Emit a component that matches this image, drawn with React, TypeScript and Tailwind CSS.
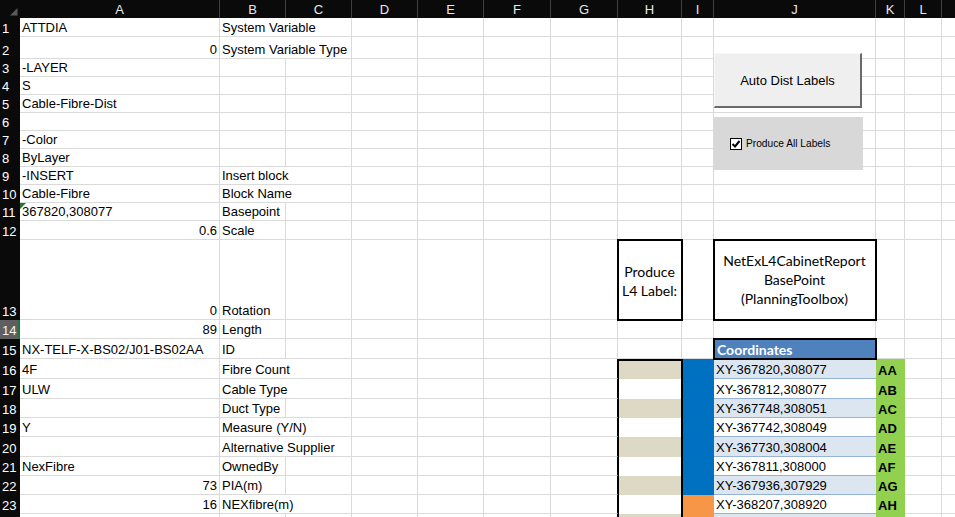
import React from 'react';

// column letters across the sheet header (M is cut off by the window edge)
const cols = ['A', 'B', 'C', 'D', 'E', 'F', 'G', 'H', 'I', 'J', 'K', 'L', ''];

type Row = { n: number; a?: string; ar?: boolean; b?: string; ov?: boolean; xy?: string; k?: string };

const rows: Row[] = [
  { n: 1, a: 'ATTDIA', b: 'System Variable', ov: true },
  { n: 2, a: '0', ar: true, b: 'System Variable Type', ov: true },
  { n: 3, a: '-LAYER' },
  { n: 4, a: 'S' },
  { n: 5, a: 'Cable-Fibre-Dist' },
  { n: 6 },
  { n: 7, a: '-Color' },
  { n: 8, a: 'ByLayer' },
  { n: 9, a: '-INSERT', b: 'Insert block', ov: true },
  { n: 10, a: 'Cable-Fibre', b: 'Block Name', ov: true },
  { n: 11, a: '367820,308077', b: 'Basepoint' },
  { n: 12, a: '0.6', ar: true, b: 'Scale' },
  { n: 13, a: '0', ar: true, b: 'Rotation' },
  { n: 14, a: '89', ar: true, b: 'Length' },
  { n: 15, a: 'NX-TELF-X-BS02/J01-BS02AA', b: 'ID' },
  { n: 16, a: '4F', b: 'Fibre Count', ov: true, xy: 'XY-367820,308077', k: 'AA' },
  { n: 17, a: 'ULW', b: 'Cable Type', ov: true, xy: 'XY-367812,308077', k: 'AB' },
  { n: 18, b: 'Duct Type', xy: 'XY-367748,308051', k: 'AC' },
  { n: 19, a: 'Y', b: 'Measure (Y/N)', ov: true, xy: 'XY-367742,308049', k: 'AD' },
  { n: 20, b: 'Alternative Supplier', ov: true, xy: 'XY-367730,308004', k: 'AE' },
  { n: 21, a: 'NexFibre', b: 'OwnedBy', xy: 'XY-367811,308000', k: 'AF' },
  { n: 22, a: '73', ar: true, b: 'PIA(m)', xy: 'XY-367936,307929', k: 'AG' },
  { n: 23, a: '16', ar: true, b: 'NEXfibre(m)', ov: true, xy: 'XY-368207,308920', k: 'AH' },
  { n: 24, xy: '', k: '' },
];

const grid = 'border-r border-b border-[#dadada]';
const txt = 'flex items-end px-[2px] pb-[1px] text-[13px] leading-[15px] whitespace-nowrap text-black';

function SheetRow({ r }: { r: Row }) {
  const table = r.n >= 16;
  const even = r.n % 2 === 0;
  return (
    <>
      {r.n === 14 ? (
        <div className="flex items-end pl-[2px] pb-[1px] text-[13px] leading-[15px] bg-[#5f5f5f] text-[#f2f2f2] border-r-2 border-[#217346]">{r.n}</div>
      ) : (
        <div className="flex items-end pl-[2px] pb-[1px] text-[13px] leading-[15px] bg-[#0a0a0a] text-white">{r.n < 24 ? r.n : ''}</div>
      )}

      <div className={`${grid} ${txt} relative ${r.ar ? 'justify-end' : ''}`}>
        {r.n === 11 && (
          <svg className="absolute left-0 top-0" width="6" height="6" viewBox="0 0 6 6">
            <path d="M0 0H6L0 6Z" fill="#1e7b34" />
          </svg>
        )}
        {r.a}
      </div>

      <div className={r.ov ? `border-b border-[#dadada] ${txt}` : `${grid} ${txt}`}>{r.b}</div>
      <div className={grid} />
      <div className={grid} />
      <div className={grid} />
      <div className={grid} />

      {table ? <div className="border-b border-b-[#dadada] border-r border-r-black" /> : <div className={grid} />}

      {/* H column */}
      {r.n === 13 ? (
        <div className="relative z-10 outline-2 outline-black -outline-offset-1 border-r border-b border-[#dadada] flex flex-col items-center justify-center font-['Lato',sans-serif] text-[14px] leading-[19px] text-black pt-[3px]">
          <span>Produce</span>
          <span>L4 Label:</span>
        </div>
      ) : table ? (
        r.n === 16 ? (
          <div className="border-x border-t-2 border-black bg-[#ddd9c4]" />
        ) : (
          <div className={`border-x border-black ${even ? 'bg-[#ddd9c4]' : 'bg-white'}`} />
        )
      ) : (
        <div className={grid} />
      )}

      {/* I column */}
      {table ? (
        <div className={`border-l border-black ${r.n >= 23 ? 'bg-[#f79646]' : 'bg-[#0070c0]'}`} />
      ) : (
        <div className={grid} />
      )}

      {/* J column */}
      {r.n === 13 ? (
        <div className="relative z-10 outline-2 outline-black -outline-offset-1 border-r border-b border-[#dadada] flex flex-col items-center justify-center font-['Lato',sans-serif] text-[14px] leading-[19px] text-black">
          <span>NetExL4CabinetReport</span>
          <span>BasePoint</span>
          <span>(PlanningToolbox)</span>
        </div>
      ) : r.n === 15 ? (
        <div className="relative z-10 outline-2 outline-black -outline-offset-1 bg-[#4f81bd] flex items-center px-[3px] font-['Lato',sans-serif] text-[14px] font-bold text-white">
          Coordinates
        </div>
      ) : table ? (
        <div className={`border-b border-[#95b3d7] ${txt} ${even ? 'bg-[#dce6f1]' : 'bg-white'}`}>{r.xy}</div>
      ) : (
        <div className={grid} />
      )}

      {/* K column */}
      {table ? (
        <div className={`bg-[#92d050] ${txt} font-bold`}>{r.k}</div>
      ) : (
        <div className={grid} />
      )}
      <div className={grid} />
      <div className={grid} />
    </>
  );
}

export default function App() {
  return (
    <div className="w-[955px] h-[517px] overflow-hidden bg-white font-['Liberation_Sans',Arial,sans-serif]">
      <div className="relative">
        <div className="grid grid-cols-[20px_200px_66px_66px_66px_66px_67px_67px_64px_32px_162px_29px_37px_64px] grid-rows-[18px_19px_22px_18px_18px_18px_18px_18px_18px_18px_18px_18px_19px_80px_19px_20px_20px_20px_19px_19px_20px_19px_19px_19px_20px]">
          {/* header row */}
          <div className="relative bg-[#0a0a0a]">
            <svg className="absolute left-0 top-0" width="20" height="18" viewBox="0 0 20 18">
              <path d="M10 15.5H17.5V8Z" fill="#5a5a5a" />
            </svg>
          </div>
          {cols.map((c, i) => (
            <div key={i} className="flex items-center justify-center pt-[1px] bg-[#0a0a0a] border-r border-[#3f3f3f] text-[13px] text-[#e8e8e8]">
              {c}
            </div>
          ))}

          {rows.map((r) => (
            <SheetRow key={r.n} r={r} />
          ))}
        </div>

        {/* form controls floating over the sheet */}
        <button className="absolute left-[714px] top-[53px] w-[148px] h-[55px] bg-[#efefef] border-t border-l border-t-[#f7f7f7] border-l-[#f7f7f7] border-r-2 border-b-2 border-r-[#6a6a6a] border-b-[#6a6a6a] flex items-center justify-center pt-[1px] text-[13px] text-black">
          Auto Dist Labels
        </button>
        <div className="absolute left-[714px] top-[117px] w-[149px] h-[53px] bg-[#d8d8d8] flex items-center pl-[16px] gap-[4px]">
          <span className="w-[12px] h-[12px] border border-black bg-white flex items-center justify-center">
            <svg width="10" height="10" viewBox="0 0 10 10">
              <path d="M1.5 5L4 7.5L8.5 2" stroke="#000" strokeWidth="2" fill="none" />
            </svg>
          </span>
          <span className="text-[10.2px] text-black">Produce All Labels</span>
        </div>
      </div>
    </div>
  );
}
